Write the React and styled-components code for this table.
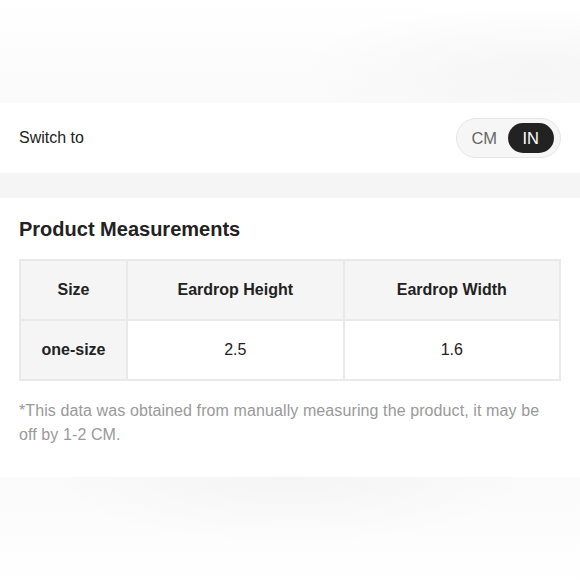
import React, { useState } from "react";
import styled, { createGlobalStyle } from "styled-components";

const GlobalStyle = createGlobalStyle`
  html, body { margin: 0; padding: 0; background: #fff; }
  body { font-family: "Liberation Sans", Arial, sans-serif; color: #222; }
`;

const rows = [{ size: "one-size", height: "2.5", width: "1.6" }];

const App = () => {
  const [unit, setUnit] = useState("IN");

  return (
    <Page>
      <GlobalStyle />
      <Fade />
      <SwitchRow>
        <SwitchLabel>Switch to</SwitchLabel>
        <Toggle>
          {["CM", "IN"].map((u) => (
            <ToggleOption key={u} $active={unit === u} onClick={() => setUnit(u)}>
              {u}
            </ToggleOption>
          ))}
        </Toggle>
      </SwitchRow>
      <Divider />
      <Section>
        <Title>Product Measurements</Title>
        <Table>
          <colgroup>
            <col style={{ width: "107px" }} />
            <col />
            <col />
          </colgroup>
          <thead>
            <tr>
              <Th>Size</Th>
              <Th>Eardrop Height</Th>
              <Th>Eardrop Width</Th>
            </tr>
          </thead>
          <tbody>
            {rows.map((r) => (
              <tr key={r.size}>
                <RowHead>{r.size}</RowHead>
                <Td>{r.height}</Td>
                <Td>{r.width}</Td>
              </tr>
            ))}
          </tbody>
        </Table>
        <Note>
          *This data was obtained from manually measuring the product, it may be off by 1-2 CM.
        </Note>
      </Section>
      <Fade $bottom />
    </Page>
  );
};

export default App;

// --- Styled Components ---
const Page = styled.div`
  width: 580px; display: flex; flex-direction: column;
`;
const Fade = styled.div`
  height: ${({ $bottom }) => ($bottom ? "110px" : "103px")};
  background:
    radial-gradient(ellipse 60% 90% at ${({ $bottom }) => ($bottom ? "50% 0%" : "92% 65%")}, rgba(0,0,0,0.025), rgba(0,0,0,0) 70%),
    linear-gradient(${({ $bottom }) => ($bottom ? "180deg" : "0deg")}, #fafafa, #ffffff);
`;
const SwitchRow = styled.div`
  height: 70px; padding: 0 19px; display: flex; align-items: center;
  justify-content: space-between; background: #fff;
`;
const SwitchLabel = styled.span`
  font-size: 16px; color: #222;
`;
const Toggle = styled.div`
  display: flex; align-items: center; height: 40px; width: 105px; padding: 0 6px 0 4px;
  border: 1px solid #e6e6e6; border-radius: 20px; background: #f6f6f6;
  box-sizing: border-box;
`;
const ToggleOption = styled.div`
  flex: 1; height: 30px; border-radius: 15px; display: flex; align-items: center;
  justify-content: center; font-size: 16.5px; cursor: pointer;
  background: ${({ $active }) => ($active ? "#222" : "transparent")};
  color: ${({ $active }) => ($active ? "#fff" : "#666")};
`;
const Divider = styled.div`
  height: 25px; background: #f5f5f5;
`;
const Section = styled.div`
  padding: 18px 19px 30px; background: #fff;
`;
const Title = styled.h2`
  margin: 0 0 17px; font-size: 20px; font-weight: 700; line-height: 26px; color: #222;
`;
const Table = styled.table`
  width: 100%; border-collapse: collapse; table-layout: fixed;
`;
const Th = styled.th`
  height: 58px; padding: 0; border: 2px solid #e9e9e9; background: #f5f5f5;
  font-size: 16px; font-weight: 700; color: #222; text-align: center;
`;
const Td = styled.td`
  height: 58px; padding: 0; border: 2px solid #e9e9e9; background: #fff;
  font-size: 16px; color: #222; text-align: center;
`;
const RowHead = styled(Td)`
  background: #f5f5f5; font-weight: 700;
`;
const Note = styled.p`
  margin: 18px 0 0; font-size: 16px; letter-spacing: 0.1px; line-height: 24px; color: #999;
`;
